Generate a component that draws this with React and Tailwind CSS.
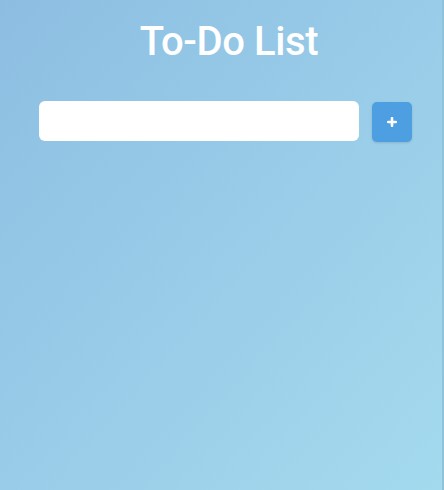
import { useState } from "react";

export default function App() {
  const [text, setText] = useState("");
  const [todos, setTodos] = useState([]);

  const add = () => {
    if (!text.trim()) return;
    setTodos((t) => [...t, text.trim()]);
    setText("");
  };

  return (
    <div
      className="w-[444px] h-[490px] overflow-hidden bg-gradient-to-br from-[#8dbee2] to-[#a4daee] border-r-2 border-r-[#8fc3dc]"
      style={{ fontFamily: "Roboto, 'Liberation Sans', sans-serif" }}
    >
      <h1 className="pt-[17px] pl-4 text-center text-[40px] leading-[50px] font-medium text-white tracking-[-0.4px]">
        To-Do List
      </h1>
      <div className="flex items-start pl-[39px] mt-[34px]">
        <input
          value={text}
          onChange={(e) => setText(e.target.value)}
          className="w-[320px] h-[40px] rounded-md bg-white px-3 text-sm text-gray-700 outline-none"
        />
        <button
          onClick={add}
          className="ml-[13px] mt-[1px] w-[40px] h-[40px] rounded-[5px] bg-[#4d9fe1] text-white flex items-center justify-center shadow-sm"
        >
          <svg width="10" height="10" viewBox="0 0 10 10">
            <path d="M5 1.2v7.6M1.2 5h7.6" stroke="white" strokeWidth="2.6" strokeLinecap="round" />
          </svg>
        </button>
      </div>
      <ul className="pl-[39px] mt-4 space-y-2">
        {todos.map((t, i) => (
          <li key={i} className="w-[373px] rounded-md bg-white px-3 py-2 text-sm text-gray-700">{t}</li>
        ))}
      </ul>
    </div>
  );
}
